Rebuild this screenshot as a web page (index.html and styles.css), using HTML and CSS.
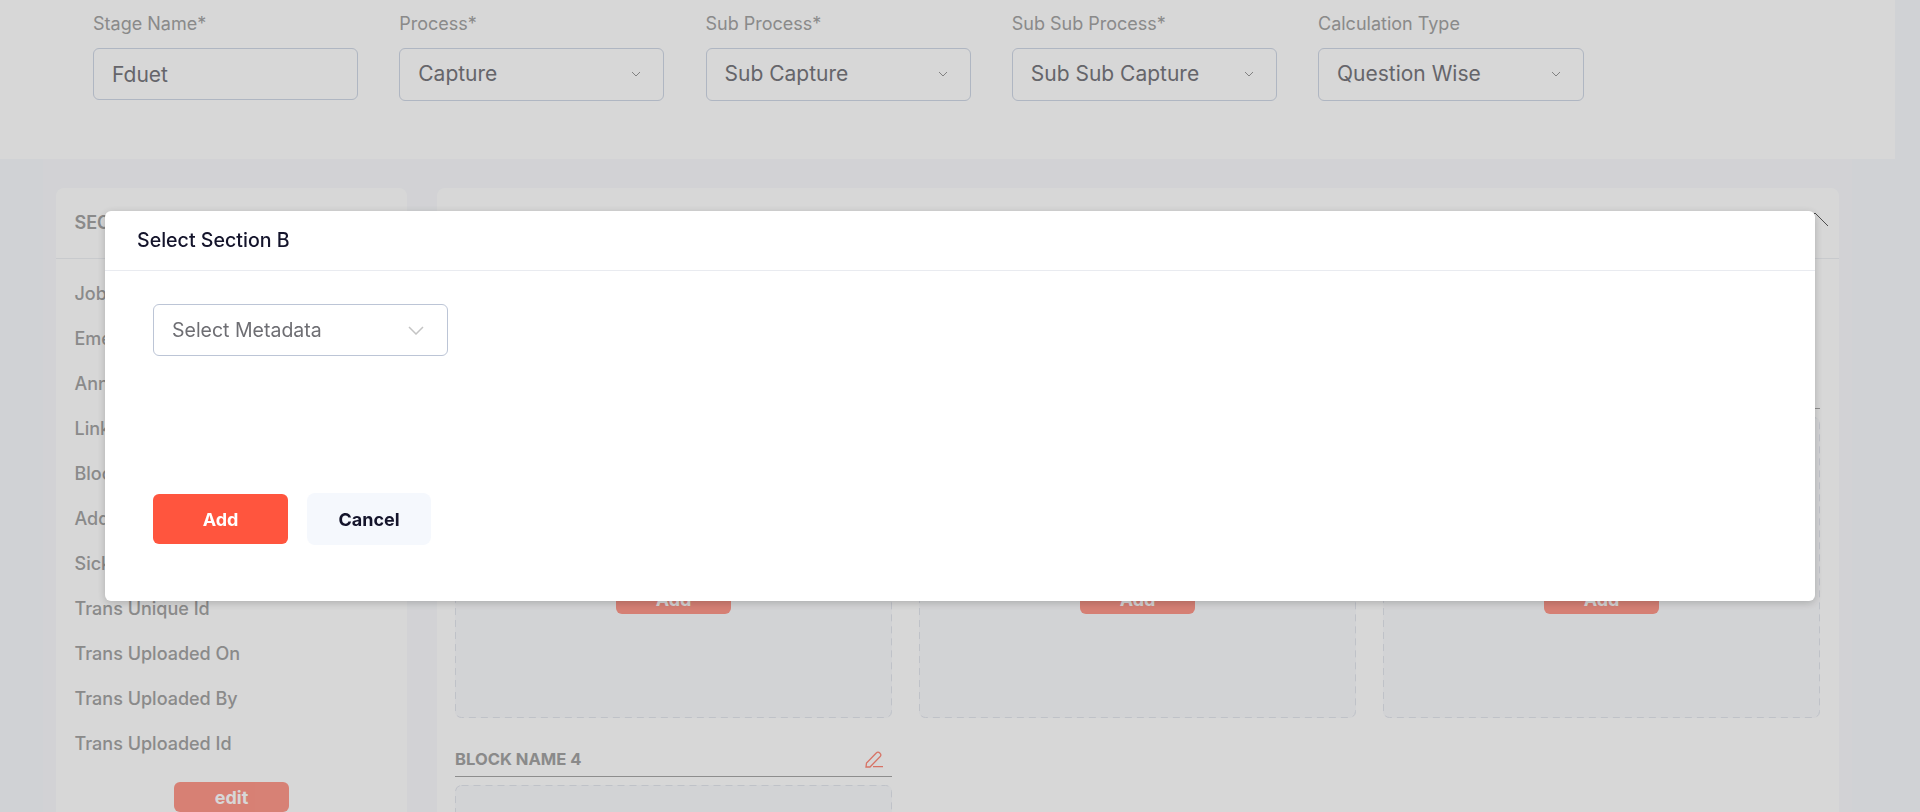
FILE: index.html
```html
<!DOCTYPE html>
<html lang="en">
<head>
    <meta charset="UTF-8">
    <meta name="viewport" content="width=device-width, initial-scale=1.0">
    <title>Stage Configuration</title>
    <link rel="stylesheet" href="styles.css">
</head>
<body>
    <section class="stage-panel">
        <div class="field">
            <label>Stage Name*</label>
            <div class="control control-input">Fduet</div>
        </div>
        <div class="field">
            <label>Process*</label>
            <div class="control">Capture
                <svg class="caret" viewBox="0 0 10 6"><path d="M1 1l4 4 4-4"/></svg>
            </div>
        </div>
        <div class="field">
            <label>Sub Process*</label>
            <div class="control">Sub Capture
                <svg class="caret" viewBox="0 0 10 6"><path d="M1 1l4 4 4-4"/></svg>
            </div>
        </div>
        <div class="field">
            <label>Sub Sub Process*</label>
            <div class="control">Sub Sub Capture
                <svg class="caret" viewBox="0 0 10 6"><path d="M1 1l4 4 4-4"/></svg>
            </div>
        </div>
        <div class="field">
            <label>Calculation Type</label>
            <div class="control">Question Wise
                <svg class="caret" viewBox="0 0 10 6"><path d="M1 1l4 4 4-4"/></svg>
            </div>
        </div>
    </section>

    <main class="builder">
        <aside class="section-card">
            <div class="card-head">SECTION A</div>
            <ul class="meta-list">
                <li>Job Title</li>
                <li>Emergency</li>
                <li>Annual</li>
                <li>Linkedin</li>
                <li>Blood</li>
                <li>Address</li>
                <li>Sick Leave</li>
                <li>Trans Unique Id</li>
                <li>Trans Uploaded On</li>
                <li>Trans Uploaded By</li>
                <li>Trans Uploaded Id</li>
            </ul>
            <button class="btn-faded btn-edit">edit</button>
        </aside>

        <section class="blocks-card">
            <div class="card-head card-head-right">
                <svg class="collapse" viewBox="0 0 28 15"><path d="M1 14L14 1l13 13"/></svg>
            </div>
            <div class="block-grid">
                <div class="block">
                    <div class="block-title">BLOCK NAME 1
                        <svg class="pencil" viewBox="0 0 18 17"><path d="M1 16l.5-4L11.500 1.800a2 2 0 0 1 3 0l.7.7a2 2 0 0 1 0 3L5 16zM8 15.700h10"/></svg>
                    </div>
                    <div class="drop-zone">
                        <svg class="dash-line"><rect x="0.500" y="0.500" width="436" height="300" rx="6"/></svg>
                        <button class="btn-faded">Add</button>
                    </div>
                </div>
                <div class="block">
                    <div class="block-title">BLOCK NAME 2
                        <svg class="pencil" viewBox="0 0 18 17"><path d="M1 16l.5-4L11.500 1.800a2 2 0 0 1 3 0l.7.7a2 2 0 0 1 0 3L5 16zM8 15.700h10"/></svg>
                    </div>
                    <div class="drop-zone">
                        <svg class="dash-line"><rect x="0.500" y="0.500" width="436" height="300" rx="6"/></svg>
                        <button class="btn-faded">Add</button>
                    </div>
                </div>
                <div class="block">
                    <div class="block-title">BLOCK NAME 3
                        <svg class="pencil" viewBox="0 0 18 17"><path d="M1 16l.5-4L11.500 1.800a2 2 0 0 1 3 0l.7.7a2 2 0 0 1 0 3L5 16zM8 15.700h10"/></svg>
                    </div>
                    <div class="drop-zone">
                        <svg class="dash-line"><rect x="0.500" y="0.500" width="436" height="300" rx="6"/></svg>
                        <button class="btn-faded">Add</button>
                    </div>
                </div>
                <div class="block">
                    <div class="block-title">BLOCK NAME 4
                        <svg class="pencil" viewBox="0 0 18 17"><path d="M1 16l.5-4L11.500 1.800a2 2 0 0 1 3 0l.7.7a2 2 0 0 1 0 3L5 16zM8 15.700h10"/></svg>
                    </div>
                    <div class="drop-zone">
                        <svg class="dash-line"><rect x="0.500" y="0.500" width="436" height="300" rx="6"/></svg>
                    </div>
                </div>
            </div>
        </section>
    </main>

    <div class="overlay">
        <div class="modal">
            <div class="modal-head">Select Section B</div>
            <div class="modal-body">
                <div class="modal-select">Select Metadata
                    <svg class="modal-caret" viewBox="0 0 16 9"><path d="M1 1l7 7 7-7"/></svg>
                </div>
                <div class="modal-actions">
                    <button class="btn-add">Add</button>
                    <button class="btn-cancel">Cancel</button>
                </div>
            </div>
        </div>
    </div>
</body>
</html>
```

FILE: styles.css
```css
:root {
    --page-bg: #f7f9fd;
    --builder-bg: #f9fafd;
    --zone-bg: #fafbfd;
    --accent: #ff553e;
    --muted-text: #a4a4a4;
    --field-text: #78787e;
    --field-border: #d0d8e6;
}

* {
    box-sizing: border-box;
}

html, body {
    height: 812px;
    overflow: hidden;
}

body {
    margin: 0;
    font-family: Inter, "Liberation Sans", sans-serif;
    background-color: var(--page-bg);
}

.stage-panel {
    display: flex;
    gap: 41.250px;
    width: 1895px;
    height: 159px;
    padding: 14px 0 0 93px;
    background-color: white;
}

.field {
    width: 265px;
}

.field:last-child {
    width: 266px;
}

.field label {
    display: block;
    height: 34px;
    font-size: 18px;
    line-height: 20px;
    color: var(--muted-text);
}

.control {
    display: flex;
    align-items: center;
    justify-content: space-between;
    height: 53px;
    padding: 0 22px 2px 18px;
    border: 1px solid var(--field-border);
    border-radius: 6px;
    font-size: 21px;
    color: var(--field-text);
}

.control-input {
    height: 52px;
    padding-bottom: 0;
}

.caret {
    width: 10px;
    height: 6px;
    fill: none;
    stroke: #9a9a9a;
    stroke-width: 1;
}

.builder {
    display: flex;
    gap: 30px;
    width: 1809px;
    margin-left: 43px;
    padding: 29px 0 0 13px;
    background-color: var(--builder-bg);
}

.section-card {
    flex: none;
    width: 351px;
    height: 640px;
    background-color: white;
    border-radius: 8px;
    text-align: center;
}

.blocks-card {
    flex: none;
    width: 1402px;
    height: 940px;
    background-color: white;
    border-radius: 8px;
}

.card-head {
    height: 71px;
    padding: 25px 18.500px 0;
    border-bottom: 1px solid #eef0f4;
    font-size: 18px;
    line-height: 20px;
    font-weight: 600;
    color: var(--muted-text);
    text-align: left;
}

.card-head-right {
    display: flex;
    justify-content: flex-end;
    padding: 24px 10px 0 0;
}

.collapse {
    width: 28px;
    height: 15px;
    fill: none;
    stroke: #5c5c5c;
    stroke-width: 1;
}

.meta-list {
    list-style: none;
    margin: 0;
    padding: 12px 18.500px 0;
    text-align: left;
}

.meta-list li {
    height: 45px;
    font-size: 18px;
    line-height: 45px;
    font-weight: 500;
    color: var(--muted-text);
}

.btn-faded {
    width: 115px;
    height: 30px;
    border: none;
    border-radius: 6px;
    background-color: var(--accent);
    opacity: 0.6;
    color: white;
    font-family: inherit;
    font-size: 18px;
    font-weight: 700;
}

.btn-edit {
    margin-top: 16px;
}

.block-grid {
    display: grid;
    grid-template-columns: repeat(3, 437px);
    gap: 0 27px;
    padding: 112px 18px 0;
}

.block {
    height: 368px;
}

.block-title {
    display: flex;
    align-items: center;
    justify-content: space-between;
    height: 38px;
    padding: 3px 9px 0 0;
    border-bottom: 1px solid #a8a8a8;
    font-size: 16.600px;
    font-weight: 700;
    color: var(--muted-text);
}

.pencil {
    width: 18px;
    height: 17px;
    fill: none;
    stroke: var(--accent);
    stroke-opacity: 0.7;
    stroke-width: 1.300;
}

.drop-zone {
    position: relative;
    height: 301px;
    margin-top: 8px;
    padding-top: 167px;
    background-color: var(--zone-bg);
    border-radius: 6px;
    text-align: center;
}

.dash-line {
    position: absolute;
    top: 0;
    left: 0;
    width: 100%;
    height: 100%;
    fill: none;
    stroke: #e3e6ee;
    stroke-width: 1;
    stroke-dasharray: 7 5;
}

.overlay {
    position: fixed;
    inset: 0;
    padding: 211px 105px 0;
    background-color: rgba(0, 0, 0, 0.157);
}

.modal {
    height: 390px;
    background-color: white;
    border-radius: 6px;
    box-shadow: 0 2px 8px rgba(0, 0, 0, 0.2);
}

.modal-head {
    height: 60px;
    padding: 19px 32px 0;
    border-bottom: 1px solid #e9ebf0;
    font-size: 19.600px;
    line-height: 20px;
    font-weight: 500;
    color: #14142b;
}

.modal-body {
    padding: 33px 48px 0;
}

.modal-select {
    display: flex;
    align-items: center;
    justify-content: space-between;
    width: 295px;
    height: 52px;
    padding: 0 23px 0 18px;
    border: 1px solid #bcc5d6;
    border-radius: 6px;
    font-size: 19.500px;
    color: #6e6e73;
}

.modal-caret {
    width: 16px;
    height: 9px;
    fill: none;
    stroke: #c4c4c4;
    stroke-width: 1.500;
}

.modal-actions {
    display: flex;
    align-items: center;
    gap: 19px;
    margin-top: 137px;
}

.btn-add, .btn-cancel {
    border: none;
    font-family: inherit;
    font-size: 18px;
    font-weight: 700;
}

.btn-add {
    width: 135px;
    height: 50px;
    border-radius: 6px;
    background-color: var(--accent);
    color: white;
}

.btn-cancel {
    width: 124px;
    height: 52px;
    border-radius: 8px;
    background-color: #f5f8fd;
    color: #14142b;
}
```
